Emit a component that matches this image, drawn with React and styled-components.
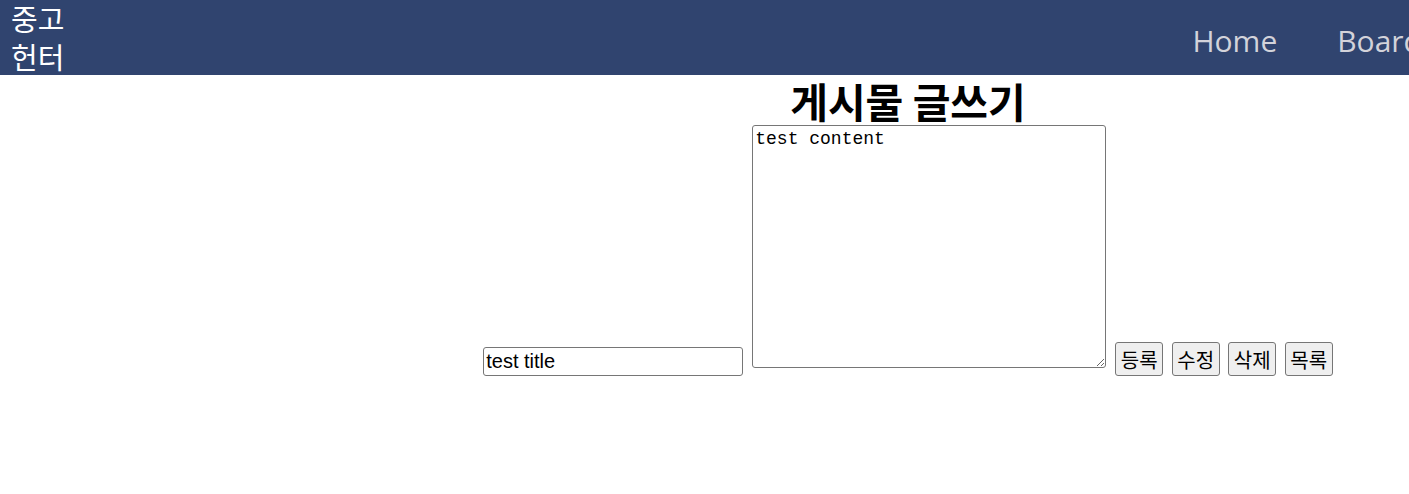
import React from 'react';
import styled, {createGlobalStyle} from 'styled-components';

const GlobalStyle = createGlobalStyle`
  html, body {
    margin: 0;
    padding: 0;
    overflow: hidden;
    background: #ffffff;
  }
`

const App = () => {
    return (
        <>
            <GlobalStyle/>
            <Page>
                <Header>
                    <Logo>중고 헌터</Logo>
                    <Nav>
                        <NavItem>Home</NavItem>
                        <NavItem>Board</NavItem>
                        <NavItem>Login</NavItem>
                        <NavItem>Join</NavItem>
                    </Nav>
                </Header>
                <Main>
                    <Title>게시물 글쓰기</Title>
                    <FormRow>
                        <TitleInput type='text' defaultValue='test title'/>
                        <ContentArea defaultValue='test content'/>
                        <Buttons>
                            <ActionButton>등록</ActionButton>
                            <ActionButton>수정</ActionButton>
                            <ActionButton>삭제</ActionButton>
                            <ActionButton>목록</ActionButton>
                        </Buttons>
                    </FormRow>
                </Main>
            </Page>
        </>
    )
}

const Page = styled('div')`
  width: 1816px;
  min-height: 494px;
`

const Header = styled('header')`
  display: flex;
  justify-content: space-between;
  align-items: center;
  background: #30446f;
  padding: 0 116px 0 11px;
`

const Logo = styled('div')`
  width: 64px;
  color: #ffffff;
  font-family: "Noto Sans CJK KR", sans-serif;
  font-size: 29px;
  line-height: 37.5px;
`

const Nav = styled('nav')`
  display: flex;
  align-items: center;
  padding-top: 5px;
`

const NavItem = styled('a')`
  padding: 0 30px;
  color: #d3d3da;
  font-family: "Open Sans", sans-serif;
  font-size: 30px;
  cursor: pointer;
`

const Main = styled('main')`
  display: flex;
  flex-direction: column;
  align-items: center;
`

const Title = styled('h1')`
  margin: 0;
  font-family: "Noto Sans CJK KR", sans-serif;
  font-weight: 700;
  font-size: 41px;
  line-height: 50px;
  color: #000000;
`

const FormRow = styled('div')`
  display: flex;
  align-items: flex-end;
  gap: 9px;
`

const TitleInput = styled('input')`
  box-sizing: border-box;
  width: 260px;
  height: 29px;
  padding: 1px 2px;
  border: 1px solid #767676;
  border-radius: 3px;
  font-family: "Liberation Sans", Arial, sans-serif;
  font-size: 20px;
  color: #000000;
`

const ContentArea = styled('textarea')`
  box-sizing: border-box;
  width: 354px;
  height: 243px;
  margin-bottom: 8px;
  padding: 3px 2px;
  border: 1px solid #767676;
  border-radius: 3px;
  font-family: "Liberation Mono", monospace;
  font-size: 18px;
  color: #000000;
`

const Buttons = styled('div')`
  display: flex;
  gap: 8.5px;
`

const ActionButton = styled('button')`
  box-sizing: border-box;
  width: 48px;
  height: 34px;
  padding: 0;
  border: 1px solid #767676;
  border-radius: 3px;
  background: #efefef;
  font-family: "Noto Sans CJK KR", sans-serif;
  font-size: 20px;
  color: #000000;
`

export default App;
